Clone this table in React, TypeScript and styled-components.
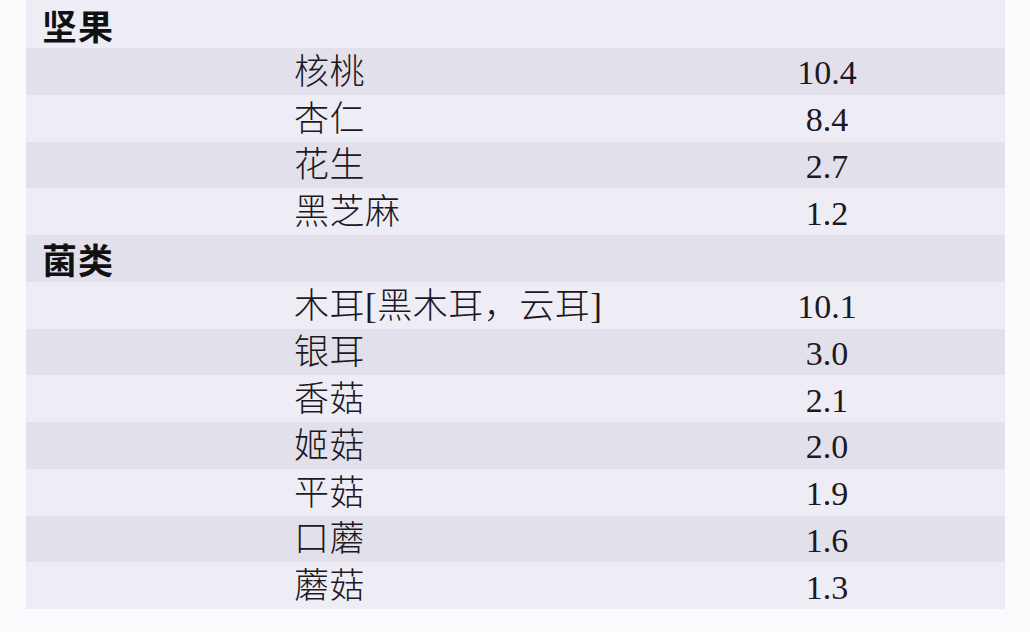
import React from 'react';
import styled, { createGlobalStyle } from 'styled-components';

const GlobalStyle = createGlobalStyle`
  html, body {
    margin: 0;
    padding: 0;
    background: #fbfbfd;
  }
`;

const Page = styled.div`
  width: 1030px;
  height: 632px;
  padding: 0 25px 0 26px;
  box-sizing: border-box;
  overflow: hidden;
`;

const Table = styled.div`
  display: flex;
  flex-direction: column;
  width: 979px;
`;

const Row = styled.div<{ $shade: boolean; $first?: boolean }>`
  display: grid;
  grid-template-columns: 268px 433px 200px;
  align-items: center;
  height: ${props => (props.$first ? '48px' : '46.75px')};
  padding-right: 78px;
  background: ${props => (props.$shade ? '#e2e1eb' : '#eeedf6')};
  color: #1d1822;
`;

const GroupTitle = styled.div`
  grid-column: 1 / -1;
  padding-left: 16px;
  font-family: "Noto Sans CJK SC", sans-serif;
  font-weight: 700;
  font-size: 35px;
  line-height: 1;
  letter-spacing: 1px;
  color: #111;
`;

const Name = styled.div`
  grid-column: 2;
  font-family: "Liberation Serif", "Noto Sans CJK SC", serif;
  font-weight: 300;
  font-size: 35px;
  line-height: 1;
  letter-spacing: 0.5px;
  white-space: nowrap;
  padding-top: 2px;
`;

const Value = styled.div`
  grid-column: 3;
  text-align: center;
  font-family: "Liberation Serif", serif;
  font-size: 34px;
  line-height: 1;
  padding-top: 4px;
`;

type Item = { name: string; value: string };
type Group = { title: string; items: Item[] };

const groups: Group[] = [
  {
    title: '坚果',
    items: [
      { name: '核桃', value: '10.4' },
      { name: '杏仁', value: '8.4' },
      { name: '花生', value: '2.7' },
      { name: '黑芝麻', value: '1.2' },
    ],
  },
  {
    title: '菌类',
    items: [
      { name: '木耳[黑木耳，云耳]', value: '10.1' },
      { name: '银耳', value: '3.0' },
      { name: '香菇', value: '2.1' },
      { name: '姬菇', value: '2.0' },
      { name: '平菇', value: '1.9' },
      { name: '口蘑', value: '1.6' },
      { name: '蘑菇', value: '1.3' },
    ],
  },
];

export default function App() {
  let index = 0;
  const rows: React.ReactNode[] = [];

  groups.forEach(group => {
    const i = index++;
    rows.push(
      <Row key={`g-${group.title}`} $shade={i % 2 === 1} $first={i === 0}>
        <GroupTitle>{group.title}</GroupTitle>
      </Row>
    );
    group.items.forEach(item => {
      const j = index++;
      rows.push(
        <Row key={`i-${item.name}`} $shade={j % 2 === 1}>
          <Name>{item.name}</Name>
          <Value>{item.value}</Value>
        </Row>
      );
    });
  });

  return (
    <>
      <GlobalStyle />
      <Page>
        <Table>{rows}</Table>
      </Page>
    </>
  );
}
